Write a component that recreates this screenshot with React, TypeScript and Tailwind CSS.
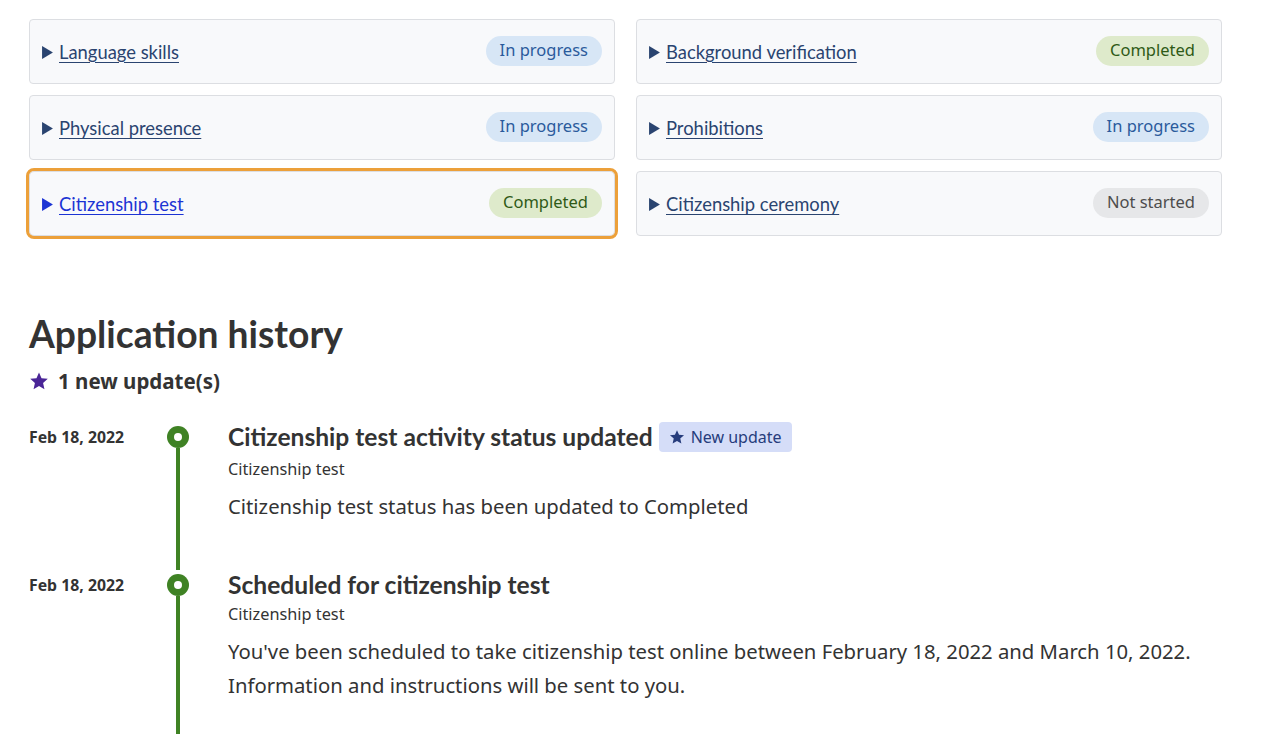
import React from "react"

type Status = "In progress" | "Completed" | "Not started"

interface Step {
  label: string
  status: Status
  active?: boolean
}

const leftSteps: Step[] = [
  { label: "Language skills", status: "In progress" },
  { label: "Physical presence", status: "In progress" },
  { label: "Citizenship test", status: "Completed", active: true },
]

const rightSteps: Step[] = [
  { label: "Background verification", status: "Completed" },
  { label: "Prohibitions", status: "In progress" },
  { label: "Citizenship ceremony", status: "Not started" },
]

const badgeStyles: Record<Status, string> = {
  "In progress": "bg-[#d7e6f6] text-[#2a5a9c]",
  Completed: "bg-[#deeacb] text-[#2f5a17]",
  "Not started": "bg-[#e6e7e9] text-[#4d4d4d]",
}

function Star({ className }: { className?: string }) {
  return (
    <svg viewBox="0 0 24 24" className={className} fill="currentColor" aria-hidden="true">
      <path d="M12 1.8l3.05 6.9 7.5.7-5.67 4.98 1.67 7.37L12 17.9l-6.55 3.85 1.67-7.37L1.45 9.4l7.5-.7z" />
    </svg>
  )
}

function StepCard({ step }: { step: Step }) {
  return (
    <div
      className={`h-[65px] flex items-center justify-between rounded-[4px] bg-[#f8f9fb] border border-[#dcdee2] pl-[12px] pr-[12px] ${
        step.active ? "outline-3 outline-[#eca03a] rounded-[5px]" : ""
      }`}
    >
      <div className="flex items-center gap-[6px] mt-[2px]">
        <svg
          viewBox="0 0 10 12"
          className={`w-[11px] h-[13px] ${step.active ? "text-[#1c34d4]" : "text-[#2a4470]"}`}
          fill="currentColor"
        >
          <path d="M0 0L10 6L0 12z" />
        </svg>
        <a
          href="#"
          className={`font-['Lato',sans-serif] text-[18.4px] underline underline-offset-[3px] decoration-1 ${
            step.active ? "text-[#1c34d4]" : "text-[#2a4470]"
          }`}
        >
          {step.label}
        </a>
      </div>
      <span
        className={`-mt-[2px] rounded-full px-[14px] h-[30px] flex items-center text-[16.5px] font-['Noto_Sans',sans-serif] ${badgeStyles[step.status]}`}
      >
        {step.status}
      </span>
    </div>
  )
}

interface HistoryItem {
  date: string
  title: string
  category: string
  lines: string[]
  isNew?: boolean
}

const history: HistoryItem[] = [
  {
    date: "Feb 18, 2022",
    title: "Citizenship test activity status updated",
    category: "Citizenship test",
    lines: ["Citizenship test status has been updated to Completed"],
    isNew: true,
  },
  {
    date: "Feb 18, 2022",
    title: "Scheduled for citizenship test",
    category: "Citizenship test",
    lines: [
      "You've been scheduled to take citizenship test online between February 18, 2022 and March 10, 2022.",
      "Information and instructions will be sent to you.",
    ],
  },
]

export default function App() {
  return (
    <div className="min-h-screen bg-white text-[#333] font-['Noto_Sans',sans-serif] pl-[29px] pt-[19px]">
      {/* Steps */}
      <div className="w-[1193px] grid grid-cols-2 gap-x-[21px]">
        <div className="flex flex-col gap-[11px]">
          {leftSteps.map((s) => (
            <StepCard key={s.label} step={s} />
          ))}
        </div>
        <div className="flex flex-col gap-[11px]">
          {rightSteps.map((s) => (
            <StepCard key={s.label} step={s} />
          ))}
        </div>
      </div>

      {/* Application history */}
      <h2 className="mt-[75px] font-['Lato',sans-serif] font-bold text-[37.2px] leading-[46px] text-[#333]">
        Application history
      </h2>
      <div className="mt-[11px] flex items-center gap-[9px]">
        <Star className="w-[20px] h-[20px] text-[#4a2597]" />
        <span className="text-[20.5px] font-bold leading-[26px]">1 new update(s)</span>
      </div>

      <div className="mt-[28px]">
        {history.map((item, i) => (
          <div key={i} className="flex">
            <div className="w-[130px] text-[15.8px] font-bold leading-[30px] shrink-0">{item.date}</div>
            <div className="w-[38px] shrink-0 flex flex-col items-center">
              <div className="mt-[4px] w-[22px] h-[22px] rounded-full bg-[#3f8224] flex items-center justify-center">
                <div className="w-[8px] h-[8px] rounded-full bg-white" />
              </div>
              <div className="w-[4px] flex-1 bg-[#3f8224]" />
            </div>
            <div className="ml-[31px] pb-[47px]">
              <div className="flex items-center gap-[6px] h-[30px]">
                <h3 className="font-['Lato',sans-serif] font-bold text-[24.6px] leading-[30px] text-[#333]">
                  {item.title}
                </h3>
                {item.isNew && (
                  <span className="flex items-center gap-[6px] h-[30px] px-[10px] rounded-[4px] bg-[#d5ddf8] text-[#263c7c] text-[16px]">
                    <Star className="w-[16px] h-[16px]" />
                    New update
                  </span>
                )}
              </div>
              <div className={`${item.isNew ? "mt-[5px]" : "mt-[2px]"} text-[16.3px] leading-[24px]`}>
                {item.category}
              </div>
              <div className="mt-[8px]">
                {item.lines.map((l, j) => (
                  <p key={j} className="text-[20.3px] leading-[34px]">
                    {l}
                  </p>
                ))}
              </div>
            </div>
          </div>
        ))}
      </div>
    </div>
  )
}
